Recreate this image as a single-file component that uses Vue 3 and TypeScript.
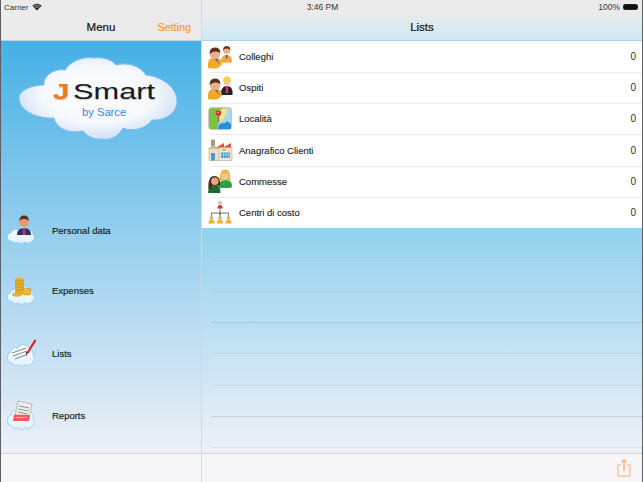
<script setup lang="ts">
const menu = [
  { id: 'person', label: 'Personal data' },
  { id: 'coins', label: 'Expenses' },
  { id: 'pen', label: 'Lists' },
  { id: 'report', label: 'Reports' }
]

const lists = [
  { id: 'colleghi', label: 'Colleghi', count: 0 },
  { id: 'ospiti', label: 'Ospiti', count: 0 },
  { id: 'map', label: 'Località', count: 0 },
  { id: 'factory', label: 'Anagrafico Clienti', count: 0 },
  { id: 'commesse', label: 'Commesse', count: 0 },
  { id: 'org', label: 'Centri di costo', count: 0 }
]

// faint rules of the empty table below the list
const rules = [0.06, 0.1, 0.24, 0.12, 0.1, 0.24, 0.12]
const cloudPath = 'M5 26 a4 4 0 0 1 -1 -8 a5 5 0 0 1 7 -3 a7 7 0 0 1 11 0 a4.5 4.5 0 0 1 4 5 a3.5 3.5 0 0 1 -1 6 a5 5 0 0 1 -7 1 a5 5 0 0 1 -7 0 a4 4 0 0 1 -6 -1 z'
</script>

<template>
  <div class="app">
    <div class="status">
      <span class="carrier">
        Carrier
        <svg class="wifi" width="10" height="8" viewBox="0 0 12 9">
          <path d="M6 8.6 0.4 3 Q6-1.600 11.600 3Z" fill="#222" />
          <path d="M2.200 3.600Q6 .9 9.800 3.600" fill="none" stroke="#ebebeb" stroke-width=".7" />
          <path d="M3.600 5.200Q6 3.400 8.400 5.200" fill="none" stroke="#ebebeb" stroke-width=".7" />
        </svg>
      </span>
      <span class="clock">3:46 PM</span>
      <span class="battery-wrap">
        100%
        <span class="battery"><span class="battery-fill" /></span>
      </span>
    </div>

    <aside class="left">
      <header class="nav nav-left">
        <span class="nav-title">Menu</span>
        <span class="setting">Setting</span>
      </header>

      <div class="left-body">
        <div class="logo">
          <svg width="160" height="86" viewBox="0 0 160 86">
            <defs>
              <radialGradient id="cloudFill" cx="50%" cy="45%" r="60%">
                <stop offset="0" stop-color="#ffffff" />
                <stop offset="0.6" stop-color="#f5f8fd" />
                <stop offset="1" stop-color="#c5daf3" />
              </radialGradient>
              <linearGradient id="miniCloud" x1="0" y1="0" x2="0" y2="1">
                <stop offset="0" stop-color="#ffffff" />
                <stop offset="1" stop-color="#dff0fb" />
              </linearGradient>
            </defs>
            <path
              d="M1 41 C2 34 14 29 26 29 C25 20 36 12 47 14 C52 5 66 0 76 2 C85 1 93 3 98 9 C108 6 122 9 128 19 C146 21 160 33 159 47 C158 58 146 65 134 64 C128 73 114 76 105 72 C101 80 92 85 84 83 C76 84 69 80 65 75 C52 78 38 73 36 62 C20 63 0 55 1 41 Z"
              fill="url(#cloudFill)"
              stroke="#7cbcf2"
              stroke-width="1"
            />
          </svg>
          <div class="wordmark"><span class="j">J</span><span class="smart">Smart</span></div>
          <div class="by">by Sarce</div>
        </div>

        <ul class="menu">
          <li v-for="item in menu" :key="item.id" class="menu-row">
            <svg class="menu-icon" width="30" height="32" viewBox="0 -1 30 32">
              <template v-if="item.id === 'person'">
                <path :d="cloudPath" class="mini-cloud" />
                <path d="M10 20 q0-7 7-7 q7 0 7 7 z" fill="#23356b" />
                <path d="M16 13 h2 l.8 7 h-3.400z" fill="#c0305a" />
                <circle cx="17" cy="7" r="4.800" fill="#e89a6c" />
                <path d="M12.200 6 q1-6 5-5.400 q4.500 0 4.500 5.400 q-2-2.500-4.800-2 q-3 0-4.700 2z" fill="#54301a" />
              </template>
              <template v-else-if="item.id === 'coins'">
                <path :d="cloudPath" class="mini-cloud" transform="translate(0,-2) scale(1,1.100)" />
                <rect x="8" y="3" width="9" height="16" rx="2" fill="#e6b02f" />
                <path d="M8 6h9M8 9h9M8 12h9M8 15h9" stroke="#b97f14" stroke-width=".6" />
                <rect x="16" y="13.500" width="8" height="6.500" rx="1.500" fill="#eab92f" stroke="#b97f14" stroke-width=".4" />
                <ellipse cx="10" cy="19.500" rx="5" ry="1.800" fill="#eab92f" stroke="#b97f14" stroke-width=".4" />
              </template>
              <template v-else-if="item.id === 'pen'">
                <path :d="cloudPath" class="mini-cloud" transform="translate(0,-10) scale(1,1.350)" />
                <path d="M5 15 L19 10 M6 18 L20 13 M8 21 L20 16.500" stroke="#777" stroke-width=".9" fill="none" />
                <path d="M28.500 2 L20.500 15" stroke="#e02020" stroke-width="2.200" />
                <path d="M21 14.500 L19 18 L19 14z" fill="#333" />
              </template>
              <template v-else>
                <path :d="cloudPath" class="mini-cloud" transform="translate(0,-9) scale(1,1.350)" />
                <path d="M11 1 L25 4 L22 19 L8 16z" fill="#eeeeee" stroke="#999" stroke-width=".6" />
                <path d="M12 6 L22 8 M11.500 9 L21.500 11 M11 12 L20.500 14" stroke="#888" stroke-width=".9" />
                <path d="M7 14.500 L23 15 L22 21 L6 21z" fill="#f0595f" />
                <path d="M9 17.500 h11" stroke="#f7b0b0" stroke-width="1" />
              </template>
            </svg>
            <span class="menu-label">{{ item.label }}</span>
          </li>
        </ul>
      </div>

      <footer class="toolbar" />
    </aside>

    <main class="right">
      <header class="nav nav-right">
        <span class="nav-title">Lists</span>
      </header>

      <div class="right-body">
        <ul class="list">
          <li v-for="row in lists" :key="row.id" class="list-row">
            <svg class="list-icon" width="25" height="24" viewBox="0 0 25 24">
              <template v-if="row.id === 'colleghi' || row.id === 'ospiti'">
                <template v-if="row.id === 'colleghi'">
                  <path d="M13 17 q0-7 5.500-7 q5.500 0 5.500 7 v.5 h-11z" fill="#f3aa2e" />
                  <path d="M17.700 10 h2 l-1 5z" fill="#2e5a9a" />
                  <circle cx="18.700" cy="5.500" r="3.600" fill="#eab08a" />
                  <path d="M15 5.500 q0-4.500 3.700-4.500 q3.700 0 3.700 4 q-2-1.500-3.700-1.500 q-2 0-3.700 2z" fill="#6b3a1e" />
                </template>
                <template v-else>
                  <path d="M13 18 q0-8 6-8 q6 0 5.500 8 v1 h-11.500z" fill="#222" />
                  <path d="M18 10 h2 l.3 7 h-2.600z" fill="#e0356a" />
                  <circle cx="19" cy="5.800" r="3.500" fill="#f0c49c" />
                  <path d="M15 5.500 q0-5 4-5 q4 0 4 5z" fill="#f3cf4a" />
                </template>
                <path d="M0 23 v-4 q0-6.500 7-6.500 q7 0 7 7 l-4 3.500 q-6 1-10 0z" fill="#f3a72b" />
                <path d="M6.500 13.500 h2 l3.500 6 z" fill="#2e5a9a" />
                <circle cx="7" cy="8.800" r="5.300" fill="#eab08a" />
                <path d="M1.700 9 q-.5-6.500 5.300-6.500 q5.500 0 5.300 5.500 q-2.800-2-5.300-1.500 q-3 0-5.300 2.500z" fill="#5f3319" />
              </template>
              <template v-else-if="row.id === 'map'">
                <rect x=".8" y=".8" width="22.500" height="21.500" rx="2.500" fill="#a9d8ee" stroke="#aaa" stroke-width=".8" />
                <path d="M1.200 3 q0-1.800 2-1.800 H15 L12 10 L9 22 H3 q-1.800 0-1.800-2z" fill="#7ec13e" />
                <path d="M9.500 4 L15 1.500 h5 L15 13 L10 15z" fill="#f1e68c" />
                <path d="M10 22 q0-5 4-6 q3 1 5-2 l4 3 v5z" fill="#2a8ed6" />
                <rect x="9.700" y="7" width="1.600" height="8" fill="#777" />
                <circle cx="10.500" cy="6" r="2.800" fill="#d8322a" />
                <circle cx="10" cy="5.500" r=".8" fill="#f6b0a8" />
              </template>
              <template v-else-if="row.id === 'factory'">
                <rect x="3" y="1.500" width="4" height="8" fill="#b9a68e" />
                <path d="M3 3.500h4M3 6h4" stroke="#7d6a56" stroke-width=".6" />
                <path d="M9 9 L16 5 V9 L23 5 V10 H9z" fill="#d95b32" />
                <rect x="9" y="9.500" width="15" height="13" fill="#f1e7d6" stroke="#a69a86" stroke-width=".5" />
                <rect x="1" y="10" width="10" height="12.500" fill="#f2dfc0" stroke="#a69a86" stroke-width=".5" />
                <path d="M0 11 L6 7 L12 11z" fill="#c7b79d" />
                <rect x="3" y="15" width="4" height="7.500" fill="#4a9bd2" />
                <rect x="13" y="14.500" width="9" height="5.500" fill="#4a9bd2" />
                <path d="M15.500 14.500v5.500M18 14.500v5.500M20.500 14.500v5.500M13 17h9" stroke="#e8eef5" stroke-width=".5" />
                <rect x="14" y="11" width="4" height="1.500" fill="#e29a3e" />
              </template>
              <template v-else-if="row.id === 'commesse'">
                <path d="M11 17 q0-6 6.500-6 q6.500 0 6.500 6 q0 2-2 2 h-9 q-2 0-2-2z" fill="#27a24a" />
                <path d="M12 12 q-1-11.500 5-11.500 q6.500 0 5 11.500 q-5-2.500-10 0z" fill="#eab52e" />
                <circle cx="17" cy="7" r="3.800" fill="#f2c39c" />
                <path d="M13.500 5.500 q3.500-3 7 0 q-3.500-1-7 0z" fill="#eab52e" />
                <path d="M0 24 q0-8.500 6.500-8.500 q6.500 0 6 8.500z" fill="#1c6b35" />
                <path d="M.5 20 q-1-13 6-13 q6.500 0 5.500 10 q-5.500-2-9 0 l-.5 3z" fill="#4a2a18" />
                <circle cx="6.800" cy="12.300" r="3.700" fill="#e7a97e" />
              </template>
              <template v-else>
                <circle cx="12" cy="2.800" r="1.900" fill="#e8b9a0" />
                <path d="M9.500 8.500 q0-3.500 2.500-3.500 q2.500 0 2.500 3.500z" fill="#e02f2f" />
                <path d="M12 8.500 V15 M3.500 18 V13 H20.500 V18 M12 13 V18" stroke="#333" stroke-width=".7" fill="none" />
                <g v-for="x in [3.500, 12, 20.500]" :key="x">
                  <circle :cx="x" cy="18" r="1.800" fill="#e8a97e" />
                  <path :d="`M${x - 3} 23.500 q0-4 3-4 q3 0 3 4z`" fill="#eeb22e" />
                </g>
              </template>
            </svg>
            <span class="list-label">{{ row.label }}</span>
            <span class="count">{{ row.count }}</span>
          </li>
        </ul>

        <div class="empty">
          <div v-for="(a, i) in rules" :key="i" class="rule" :style="{ opacity: a }" />
        </div>
      </div>

      <footer class="toolbar toolbar-right">
        <svg width="14" height="19" viewBox="0 0 14 19" fill="none" stroke="#f8b27a" stroke-width="1.100">
          <path d="M4 6 H1 V17 H13 V6 H10" />
          <path d="M7 12 V1" stroke-width="1.500" />
          <path d="M4.500 3 L7 .8 L9.500 3" />
        </svg>
      </footer>
    </main>
  </div>
</template>

<style scoped>
.app {
  position: relative;
  width: 643px;
  height: 482px;
  box-sizing: border-box;
  display: flex;
  overflow: hidden;
  border-left: 1px solid #5c6064;
  border-right: 1px solid #5c6064;
  font-family: 'Liberation Sans', Arial, sans-serif;
  color: #222;
  background: #f6f6f8;
}
.status {
  position: absolute;
  inset: 0 0 auto 0;
  z-index: 2;
  height: 14px;
  display: grid;
  grid-template-columns: 1fr auto 1fr;
  align-items: center;
  padding: 0 4px 0 3px;
  font-size: 8.500px;
  color: #333;
}
.carrier {
  display: flex;
  align-items: center;
  gap: 4px;
  font-size: 8px;
}
.clock {
  margin-left: 3px;
}
.battery-wrap {
  display: flex;
  justify-content: flex-end;
  align-items: center;
  gap: 3px;
}
.battery {
  width: 15px;
  height: 6px;
  box-sizing: border-box;
  border: 1px solid #222;
  border-radius: 1.500px;
  display: block;
}
.battery-fill {
  display: block;
  height: 100%;
  background: #111;
}
.left {
  width: 200px;
  flex: none;
  display: flex;
  flex-direction: column;
  border-right: 1px solid #c9dbe6;
}
.right {
  flex: 1;
  display: flex;
  flex-direction: column;
  min-width: 0;
}
.nav {
  height: 41px;
  flex: none;
  padding-top: 13px;
  box-sizing: border-box;
  display: flex;
  align-items: center;
  border-bottom: 1px solid #b9d3e2;
}
.nav-left {
  background: #ebebeb;
  position: relative;
  justify-content: center;
}
.nav-right {
  background: linear-gradient(#ebebeb, #ebebeb 30%, #cde9f6);
  justify-content: center;
}
.nav-title {
  font-size: 11.500px;
  color: #111;
  -webkit-text-stroke: 0.2px #111;
}
.setting {
  position: absolute;
  right: 10px;
  font-size: 10.800px;
  color: #f79a2e;
  -webkit-text-stroke: 0.15px #f79a2e;
}
.left-body {
  flex: 1;
  min-height: 0;
  background: linear-gradient(#46b1e6, #eef0f7);
}
.logo {
  position: relative;
  width: 160px;
  height: 86px;
  margin: 15px 0 0 17px;
}
.wordmark {
  position: absolute;
  left: 35px;
  top: 24px;
  display: flex;
  align-items: baseline;
  font-size: 22px;
  line-height: 24px;
  text-shadow: 0 1px 1px rgba(0, 0, 0, 0.25);
}
.j {
  color: #ee7a1e;
  font-weight: 700;
  width: 20px;
  transform: scaleX(1.350);
  transform-origin: left;
}
.smart {
  color: #1b1b1b;
  transform: scaleX(1.400);
  transform-origin: left;
}
.by {
  position: absolute;
  left: 64px;
  top: 50px;
  font-size: 11.200px;
  color: #3389e6;
}
.menu {
  list-style: none;
  margin: 72px 0 0;
  padding: 0 0 0 6px;
  display: grid;
  grid-template-rows: 60px 63px 62px 62px;
}
.menu-row {
  height: 32px;
  display: flex;
  align-items: center;
  gap: 15px;
}
.mini-cloud {
  fill: url(#miniCloud);
  stroke: #8fcdf2;
  stroke-width: 0.7;
}
.menu-label {
  font-size: 9.500px;
  color: #14181c;
  -webkit-text-stroke: 0.15px #14181c;
}
.toolbar {
  height: 29px;
  flex: none;
  box-sizing: border-box;
  background: #f6f6f8;
  border-top: 1px solid #d3d5da;
}
.toolbar-right {
  display: flex;
  justify-content: flex-end;
  align-items: flex-start;
  padding: 5px 11px 0 0;
}
.right-body {
  flex: 1;
  min-height: 0;
  display: flex;
  flex-direction: column;
}
.list {
  list-style: none;
  margin: 0;
  padding: 0;
  height: 187px;
  flex: none;
  display: grid;
  grid-template-rows: repeat(6, 1fr);
  background: #fff;
}
.list-row {
  position: relative;
  display: flex;
  align-items: center;
  gap: 6px;
  padding: 0 6px;
}
.list-row + .list-row::before {
  content: '';
  position: absolute;
  top: 0;
  left: 9px;
  right: 0;
  height: 1px;
  background: #ececec;
}
.list-label {
  flex: 1;
  font-size: 9.500px;
  color: #2a2a2a;
  -webkit-text-stroke: 0.15px #2a2a2a;
}
.count {
  font-size: 10px;
  color: #333;
}
.empty {
  flex: 1;
  min-height: 0;
  background: linear-gradient(#93d2ee, #eef0f7);
  padding: 31.500px 0 0 9px;
  display: flex;
  flex-direction: column;
  gap: 30.300px;
}
.rule {
  height: 1px;
  flex: none;
  background: #6f7e8e;
}
</style>

<style>
html,
body {
  margin: 0;
  background: #f6f6f8;
}
</style>
